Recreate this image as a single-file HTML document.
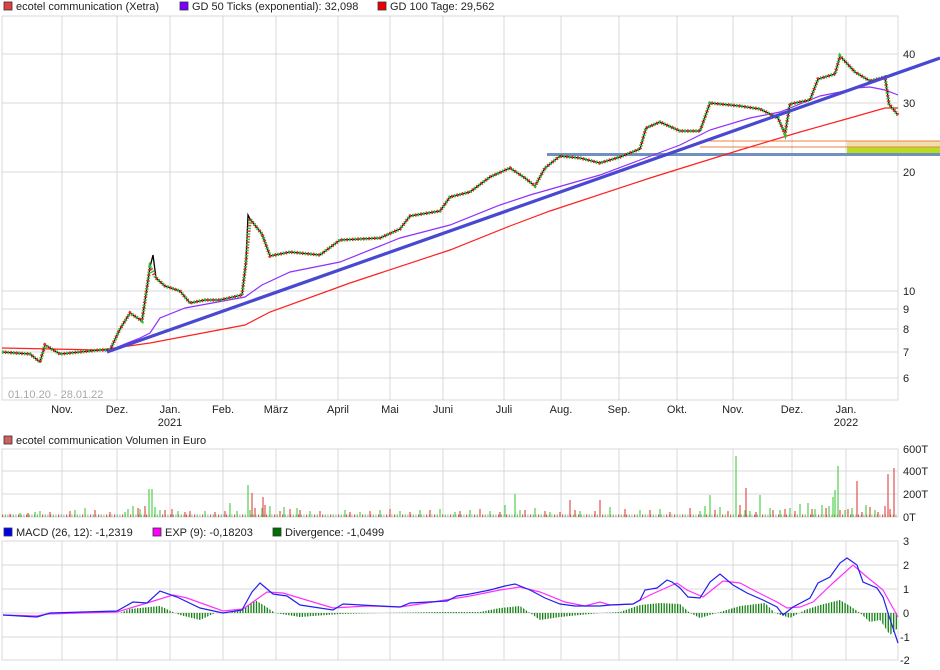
<!DOCTYPE html>
<html><head><meta charset="utf-8">
<style>
html,body{margin:0;padding:0;background:#fff;}
svg{display:block;font-family:"Liberation Sans",sans-serif;}
text{font-size:11px;fill:#222;}
</style></head><body>
<svg width="940" height="670" xmlns="http://www.w3.org/2000/svg">
<defs>
<pattern id="vp" x="2" y="0" width="8" height="670" patternUnits="userSpaceOnUse">
<rect x="0" y="0" width="1.2" height="670" fill="#e05050"/><rect x="2.7" y="0" width="1.2" height="670" fill="#50d050"/><rect x="5.3" y="0" width="1.2" height="670" fill="#b0b0b0"/>
</pattern>
<pattern id="hp" x="2" y="0" width="2.7" height="670" patternUnits="userSpaceOnUse">
<rect x="0" y="0" width="1.3" height="670" fill="#108010"/>
</pattern>
</defs>
<g fill="#fff" stroke="#d8d8d8">
<rect x="2" y="16" width="896" height="384"/>
<rect x="2" y="449" width="896" height="68"/>
<rect x="2" y="541" width="896" height="119"/>
</g>
<g stroke="#d8d8d8">
<path d="M62 16V400M117 16V400M170 16V400M223 16V400M276 16V400M338 16V400M390 16V400M443 16V400M504 16V400M561 16V400M619 16V400M677 16V400M733 16V400M792 16V400M846 16V400"/>
<path d="M62 449V517M117 449V517M170 449V517M223 449V517M276 449V517M338 449V517M390 449V517M443 449V517M504 449V517M561 449V517M619 449V517M677 449V517M733 449V517M792 449V517M846 449V517"/>
<path d="M62 541V660M117 541V660M170 541V660M223 541V660M276 541V660M338 541V660M390 541V660M443 541V660M504 541V660M561 541V660M619 541V660M677 541V660M733 541V660M792 541V660M846 541V660"/>
<path d="M2 54H898M2 103H898M2 172H898M2 291H898M2 309H898M2 329H898M2 352H898M2 378H898"/>
<path d="M2 471H898M2 494H898M2 565H898M2 589H898M2 613H898M2 637H898"/>
</g>
<rect x="4" y="2" width="8" height="8" fill="#e04040" stroke="#333" stroke-width="0.8"/><text x="16" y="10">ecotel communication (Xetra)</text>
<rect x="180" y="2" width="8" height="8" fill="#7a00ff" stroke="#333" stroke-width="0.8"/><text x="192" y="10">GD 50 Ticks (exponential): 32,098</text>
<rect x="378" y="2" width="8" height="8" fill="#ee0000" stroke="#333" stroke-width="0.8"/><text x="390" y="10">GD 100 Tage: 29,562</text>
<rect x="4" y="436" width="8" height="8" fill="#d06060" stroke="#333" stroke-width="0.8"/><text x="16" y="444">ecotel communication Volumen in Euro</text>
<rect x="4" y="528" width="8" height="8" fill="#0000ee" stroke="#333" stroke-width="0.8"/><text x="16" y="536">MACD (26, 12): -1,2319</text>
<rect x="153" y="528" width="8" height="8" fill="#ff00ff" stroke="#333" stroke-width="0.8"/><text x="165" y="536">EXP (9): -0,18203</text>
<rect x="273" y="528" width="8" height="8" fill="#007000" stroke="#333" stroke-width="0.8"/><text x="285" y="536">Divergence: -1,0499</text>
<text x="903" y="58">40</text><text x="903" y="107">30</text><text x="903" y="176">20</text><text x="903" y="295">10</text><text x="903" y="313">9</text><text x="903" y="333">8</text><text x="903" y="356">7</text><text x="903" y="382">6</text>
<text x="903" y="453">600T</text><text x="903" y="475">400T</text><text x="903" y="498">200T</text><text x="903" y="521">0T</text>
<text x="903" y="545">3</text><text x="903" y="569">2</text><text x="903" y="593">1</text><text x="903" y="617">0</text><text x="900" y="641">-1</text><text x="900" y="664">-2</text>
<g text-anchor="middle">
<text x="62" y="413">Nov.</text><text x="117" y="413">Dez.</text><text x="170" y="413">Jan.</text><text x="223" y="413">Feb.</text><text x="276" y="413">März</text><text x="338" y="413">April</text><text x="390" y="413">Mai</text><text x="443" y="413">Juni</text><text x="504" y="413">Juli</text><text x="561" y="413">Aug.</text><text x="619" y="413">Sep.</text><text x="677" y="413">Okt.</text><text x="733" y="413">Nov.</text><text x="792" y="413">Dez.</text><text x="846" y="413">Jan.</text>
<text x="170" y="426">2021</text><text x="846" y="426">2022</text>
</g>
<text x="8" y="398" style="fill:#a8a8a8">01.10.20 - 28.01.22</text>
<rect x="847" y="141" width="93" height="6" fill="#eedfb0"/><rect x="847" y="147" width="93" height="7" fill="#b8dc20"/>
<line x1="700" y1="141" x2="940" y2="141" stroke="#f08040"/><line x1="700" y1="147" x2="940" y2="147" stroke="#f08040"/>
<line x1="547" y1="154.5" x2="940" y2="154.5" stroke="#7090c0" stroke-width="3"/>
<polyline fill="none" stroke="#ff2020" stroke-width="1.2" points="2,348 100,350 150,343 245,325 270,312 350,283 450,250 510,226 550,211 650,178 740,150 800,132 850,118 885,108 898,108"/>
<polyline fill="none" stroke="#9030ff" stroke-width="1.2" points="110,350 140,338 150,333 160,318 185,308 245,297 262,285 290,272 340,262 400,238 450,225 500,205 530,195 600,175 640,160 680,145 710,130 750,118 780,112 800,104 820,96 840,92 855,88 870,87 885,90 898,95"/>
<polyline fill="none" stroke="#000" stroke-width="1.3" points="2,352 30,354 40,362 45,345 60,354 80,352 100,350 110,350 120,329 130,313 142,321 150,267 153,255 156,278 165,286 180,291 190,303 205,300 220,300 242,295 246,262 248,215 250,219 262,234 270,256 290,252 320,255 340,240 380,238 400,229 410,216 440,211 450,197 470,192 490,177 510,168 525,178 535,186 545,168 560,156 580,158 600,163 620,157 640,149 646,128 660,122 680,131 700,131 710,103 740,106 760,109 778,118 785,134 790,104 810,100 818,79 835,74 840,56 855,72 870,81 885,77 889,104 898,115"/>
<polyline fill="none" stroke="#30c030" stroke-width="3.5" stroke-dasharray="1.5 4" points="2,352 30,354 40,362 45,345 60,354 80,352 100,350 110,350 120,329 130,313 142,321 150,267 156,278 165,286 180,291 190,303 205,300 220,300 242,295 246,262 250,219 262,234 270,256 290,252 320,255 340,240 380,238 400,229 410,216 440,211 450,197 470,192 490,177 510,168 525,178 535,186 545,168 560,156 580,158 600,163 620,157 640,149 646,128 660,122 680,131 700,131 710,103 740,106 760,109 778,118 785,134 790,104 810,100 818,79 835,74 840,56 855,72 870,81 885,77 889,104 898,115"/>
<polyline fill="none" stroke="#e03030" stroke-width="3.5" stroke-dasharray="1.5 4" stroke-dashoffset="2.7" points="2,352 30,354 40,362 45,345 60,354 80,352 100,350 110,350 120,329 130,313 142,321 150,267 156,278 165,286 180,291 190,303 205,300 220,300 242,295 246,262 250,219 262,234 270,256 290,252 320,255 340,240 380,238 400,229 410,216 440,211 450,197 470,192 490,177 510,168 525,178 535,186 545,168 560,156 580,158 600,163 620,157 640,149 646,128 660,122 680,131 700,131 710,103 740,106 760,109 778,118 785,134 790,104 810,100 818,79 835,74 840,56 855,72 870,81 885,77 889,104 898,115"/>
<line x1="107" y1="352" x2="940" y2="58" stroke="#4848d0" stroke-width="3.2"/>
<!-- volume -->
<rect x="2" y="514.5" width="896" height="2.5" fill="url(#vp)"/>
<g stroke-width="1.2">
<path stroke="#50d050" d="M20 517V513M35 517V512M40 517V511M75 517V510M85 517V508M125 517V512M128 517V509M133 517V506M140 517V509M155 517V507M160 517V510M178 517V511M205 517V511M230 517V503M237 517V511M250 517V510M262 517V508M270 517V506M284 517V507M297 517V508M310 517V511M345 517V510M360 517V512M380 517V510M400 517V511M420 517V510M440 517V509M455 517V512M470 517V510M490 517V511M505 517V505M520 517V510M535 517V508M550 517V512M580 517V511M610 517V507M640 517V510M660 517V509M700 517V511M705 517V506M720 517V507M745 517V510M750 517V511M770 517V508M780 517V510M790 517V508M800 517V504M808 517V503M815 517V509M822 517V505M829 517V506M833 517V497M845 517V510M852 517V508M866 517V505M875 517V510M149 517V489M152 517V489M248 517V485M736 517V456M838 517V466M835 517V490M760 517V495M515 517V494M710 517V495"/>
<path stroke="#e05050" d="M10 517V514M28 517V513M50 517V512M70 517V511M95 517V510M110 517V512M138 517V508M145 517V506M165 517V510M172 517V509M185 517V512M190 517V511M215 517V512M225 517V511M255 517V508M265 517V505M280 517V511M290 517V509M300 517V510M320 517V511M350 517V512M370 517V511M390 517V509M410 517V512M430 517V510M460 517V511M480 517V509M500 517V512M525 517V510M545 517V511M560 517V512M575 517V510M595 517V511M625 517V509M650 517V510M670 517V512M690 517V508M715 517V510M728 517V511M740 517V505M756 517V512M773 517V510M785 517V509M795 517V511M812 517V509M826 517V508M840 517V510M848 517V509M862 517V512M870 517V507M878 517V512M885 517V506M890 517V509M252 517V493M746 517V488M857 517V481M888 517V474M894 517V468M570 517V500M600 517V500M263 517V497"/>
</g>
<polygon fill="url(#hp)" points="2,613 120,613 130,609 160,606 175,613 180,615 200,620 215,613 230,613 245,608 255,600 265,606 275,613 300,617 340,614 380,613 440,612 480,612 500,608 520,606 530,613 540,620 560,617 600,613 620,612 640,605 660,603 680,604 690,613 700,618 720,612 740,606 765,603 775,613 790,618 805,610 820,605 840,600 850,606 860,613 870,622 880,620 890,635 898,628 898,613"/>
<polyline fill="none" stroke="#ff30ff" stroke-width="1.2" points="3,615 37,616 47,614 80,613 117,612 147,603 173,595 187,598 223,611 243,609 267,592 283,593 333,608 367,606 400,607 433,602 470,596 500,590 520,587 540,592 565,602 585,606 600,602 610,605 633,604 650,595 677,583 687,590 703,597 723,581 740,583 757,592 777,602 787,608 800,607 813,602 833,583 853,565 867,577 883,590 898,617"/>
<polyline fill="none" stroke="#2020ee" stroke-width="1.2" points="3,615 37,617 50,613 117,611 133,602 147,603 160,591 177,597 200,608 223,613 242,610 252,592 260,583 273,594 287,596 300,605 333,610 343,604 400,607 410,603 447,601 457,596 470,594 490,590 505,586 515,584 530,590 545,598 560,604 575,606 590,606 600,606 610,605 633,604 640,600 645,590 657,588 667,580 672,582 680,588 688,597 700,598 710,582 720,574 733,585 747,593 763,600 777,607 783,615 793,607 810,598 818,583 830,577 840,563 847,558 857,565 863,582 877,588 883,597 888,613 898,643"/>
</svg>
</body></html>
